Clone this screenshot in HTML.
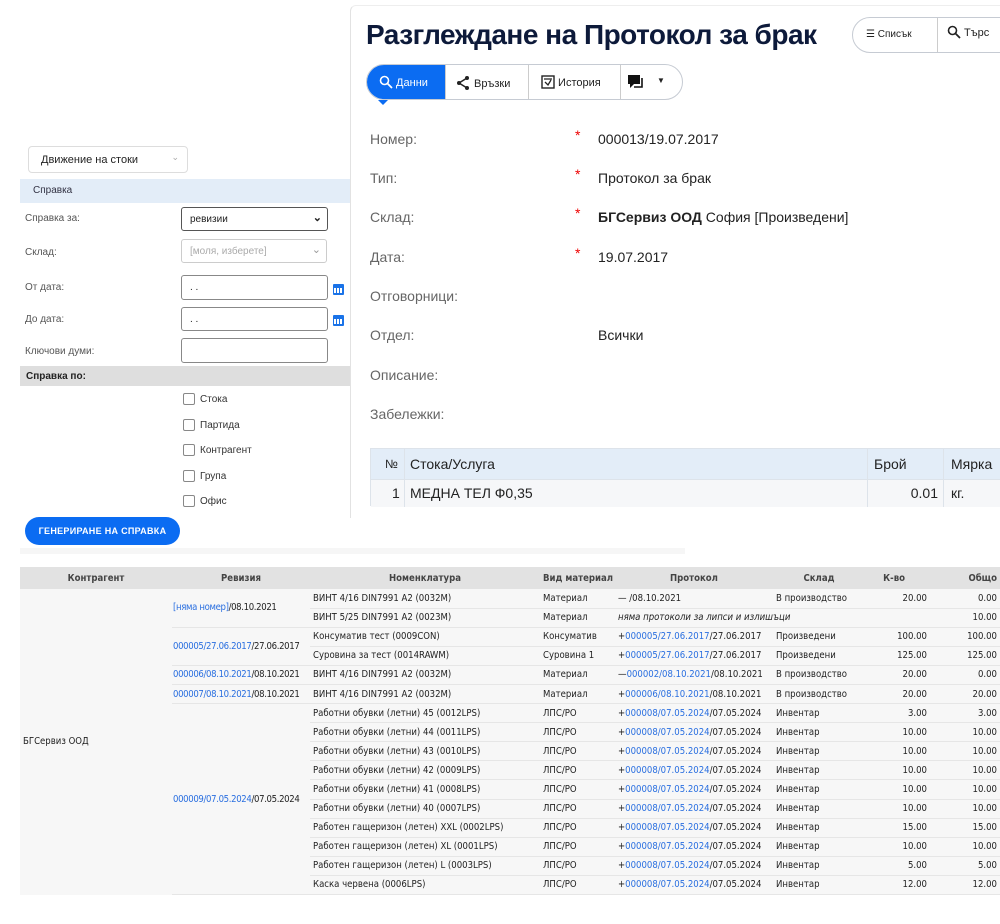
<!DOCTYPE html>
<html><head><meta charset="utf-8"><style>
*{box-sizing:border-box;margin:0;padding:0}
body{width:1000px;height:924px;background:#fff;font-family:"Liberation Sans","Noto Sans CJK SC",sans-serif;position:relative;overflow:hidden;color:#222}
.abs{position:absolute}
.lbl{position:absolute;left:25px;font-size:10px;color:#555}
.inp{position:absolute;left:181px;width:147px;height:25px;border:1px solid #888;border-radius:3px;background:#fff;font-size:10px;padding:6px 8px}
.cal{position:absolute;left:333px;width:11px;height:11px;background:#1a73e8;border-radius:1px}
.cal:after{content:"";position:absolute;left:1px;top:4px;width:9px;height:5px;background:repeating-linear-gradient(90deg,#fff 0 2px,#1a73e8 2px 3px)}
.cb{position:absolute;left:183px;width:12px;height:12px;border:1px solid #888;border-radius:2px}
.cbl{position:absolute;left:200px;font-size:10px;color:#333}
#panel{position:absolute;left:350px;top:5px;width:660px;height:513px;background:#fff;border-left:1px solid #e2e2e2;border-top:1px solid #eee;border-top-left-radius:6px}
.fl{position:absolute;left:370px;font-size:14px;color:#666}
.fv{position:absolute;left:598px;font-size:14px;color:#222}
.st{position:absolute;left:575px;color:#e00;font-size:14px}
table.b{position:absolute;left:20px;top:567px;width:980px;border-collapse:collapse;table-layout:fixed;font-size:9.5px;font-family:"DejaVu Sans Condensed","Liberation Sans",sans-serif}
table.b th{background:#e2e2e2;height:22px;font-weight:bold;color:#444;font-size:9.5px}
table.b td{background:#f7f7f7;height:19.1px;padding:0 3px;border-bottom:1px solid #e6e6e6;white-space:nowrap;overflow:hidden;color:#222}
table.b td.k{border-bottom:none}
table.b td.rv{padding:0 1px;letter-spacing:-0.35px}
.r{text-align:right}
a{color:#2a6fe0;text-decoration:none}
</style></head><body>

<div class="abs" style="left:28px;top:146px;width:160px;height:27px;border:1px solid #ddd;border-radius:4px;font-size:11px;padding:7px 12px;color:#222">Движение на стоки<span style="position:absolute;right:8px;top:5px;color:#aaa;font-size:9px">&#8964;</span></div>
<div class="abs" style="left:20px;top:179px;width:330px;height:24px;background:#e3edf8;font-size:10px;padding:6px 13px;color:#334">Справка</div>
<div class="lbl" style="top:213px">Справка за:</div>
<div class="inp" style="top:207px;height:24px;border-color:#555;padding:6px 8px">ревизии<span style="position:absolute;right:5px;top:3px;font-weight:bold;font-size:11px">&#8964;</span></div>
<div class="lbl" style="top:247px">Склад:</div>
<div class="inp" style="top:239px;width:146px;height:24px;border-color:#ccc;color:#aaa">[моля, изберете]<span style="position:absolute;right:5px;top:3px;color:#999;font-size:11px">&#8964;</span></div>
<div class="lbl" style="top:282px">От дата:</div>
<div class="inp" style="top:275px">. .</div><div class="cal" style="top:284px"></div>
<div class="lbl" style="top:314px">До дата:</div>
<div class="inp" style="top:307px;height:24px">. .</div><div class="cal" style="top:315px"></div>
<div class="lbl" style="top:346px">Ключови думи:</div>
<div class="inp" style="top:338px;height:25px"></div>
<div class="abs" style="left:20px;top:366px;width:330px;height:20px;background:#dedede;font-size:10px;font-weight:bold;padding:5px 6px;color:#222">Справка по:</div>
<div class="cb" style="top:393px"></div><div class="cbl" style="top:394px">Стока</div>
<div class="cb" style="top:419px"></div><div class="cbl" style="top:420px">Партида</div>
<div class="cb" style="top:444px"></div><div class="cbl" style="top:445px">Контрагент</div>
<div class="cb" style="top:470px"></div><div class="cbl" style="top:471px">Група</div>
<div class="cb" style="top:495px"></div><div class="cbl" style="top:496px">Офис</div>
<div class="abs" style="left:25px;top:517px;width:155px;height:28px;background:#0b6cf2;border-radius:14px;color:#fff;font-size:9px;font-weight:bold;text-align:center;line-height:28px;letter-spacing:.3px">ГЕНЕРИРАНЕ НА СПРАВКА</div>
<div class="abs" style="left:20px;top:548px;width:665px;height:6px;background:#f6f6f6"></div>

<div id="panel"></div>
<div class="abs" style="left:366px;top:19px;font-size:28px;font-weight:bold;color:#0d1a3a;letter-spacing:-.5px">Разглеждане на Протокол за брак</div>
<div class="abs" style="left:852px;top:17px;width:170px;height:36px;border:1.5px solid #c6cbd3;border-radius:18px"></div>
<div class="abs" style="left:937px;top:18px;width:1px;height:34px;background:#ccc"></div>
<div class="abs" style="left:866px;top:29px;font-size:10px;color:#222">&#9776; Списък</div>
<div class="abs" style="left:947px;top:25px;font-size:11px;color:#222"><svg width="14" height="14" viewBox="0 0 14 14" style="vertical-align:-3px"><circle cx="5.5" cy="5.5" r="4" fill="none" stroke="#222" stroke-width="1.6"/><path d="M8.5 8.5L13 13" stroke="#222" stroke-width="1.8"/></svg> Търс</div>
<div class="abs" style="left:366px;top:64px;width:317px;height:36px;border:1.5px solid #c6cbd3;border-radius:18px;overflow:hidden">
 <div class="abs" style="left:0;top:0;width:78px;height:36px;background:#0b6cf2;color:#fff;font-size:11px;padding:10px 0 0 12px"><svg width="14" height="14" viewBox="0 0 14 14" style="vertical-align:-3px"><circle cx="5.5" cy="5.5" r="4" fill="none" stroke="#fff" stroke-width="1.6"/><path d="M8.5 8.5L13 13" stroke="#fff" stroke-width="1.8"/></svg> Данни</div>
 <div class="abs" style="left:78px;top:0;width:1px;height:36px;background:#ccc"></div>
 <div class="abs" style="left:88px;top:10px;font-size:11px;color:#222"><svg width="16" height="16" viewBox="0 0 16 16" style="vertical-align:-4px"><path d="M12 3L4 8L12 13" fill="none" stroke="#222" stroke-width="1.5"/><circle cx="12" cy="3" r="2" fill="#222"/><circle cx="4" cy="8" r="2" fill="#222"/><circle cx="12" cy="13" r="2" fill="#222"/></svg> Връзки</div>
 <div class="abs" style="left:161px;top:0;width:1px;height:36px;background:#ccc"></div>
 <div class="abs" style="left:174px;top:10px;font-size:11px;color:#222"><svg width="14" height="14" viewBox="0 0 14 14" style="vertical-align:-3px"><rect x="1" y="1" width="12" height="12" fill="none" stroke="#222" stroke-width="1.4"/><path d="M3 4h8M4 7l3 3 3-5" fill="none" stroke="#222" stroke-width="1.3"/></svg> История</div>
 <div class="abs" style="left:253px;top:0;width:1px;height:36px;background:#ccc"></div>
 <svg class="abs" style="left:260px;top:9px" width="18" height="16" viewBox="0 0 18 16"><rect x="1" y="1" width="12" height="9" fill="#111"/><path d="M3 10v4l4-4z" fill="#111"/><path d="M15 4v9h-8" fill="none" stroke="#111" stroke-width="1.6"/></svg>
 <div class="abs" style="left:290px;top:11px;font-size:8px">&#9660;</div>
</div>
<div class="abs" style="left:378px;top:100px;width:0;height:0;border-left:5px solid transparent;border-right:5px solid transparent;border-top:5px solid #0b6cf2"></div>

<div class="fl" style="top:131px">Номер:</div><div class="st" style="top:127px">*</div><div class="fv" style="top:131px">000013/19.07.2017</div>
<div class="fl" style="top:170px">Тип:</div><div class="st" style="top:166px">*</div><div class="fv" style="top:170px">Протокол за брак</div>
<div class="fl" style="top:209px">Склад:</div><div class="st" style="top:205px">*</div><div class="fv" style="top:209px"><b>БГСервиз ООД</b> София [Произведени]</div>
<div class="fl" style="top:249px">Дата:</div><div class="st" style="top:245px">*</div><div class="fv" style="top:249px">19.07.2017</div>
<div class="fl" style="top:288px">Отговорници:</div>
<div class="fl" style="top:327px">Отдел:</div><div class="fv" style="top:327px">Всички</div>
<div class="fl" style="top:367px">Описание:</div>
<div class="fl" style="top:406px">Забележки:</div>

<div class="abs" style="left:370px;top:448px;width:640px;height:58px;border:1px solid #dde3ea;font-size:14px">
 <div class="abs" style="left:0;top:0;width:640px;height:30px;background:#e3edf8"></div>
 <div class="abs" style="left:0;top:30px;width:640px;height:28px;background:#f6f7f9"></div>
 <div class="abs" style="left:33px;top:0;width:1px;height:58px;background:#dde3ea"></div>
 <div class="abs" style="left:496px;top:0;width:1px;height:58px;background:#dde3ea"></div>
 <div class="abs" style="left:572px;top:0;width:1px;height:58px;background:#dde3ea"></div>
 <div class="abs" style="left:0;top:30px;width:640px;height:1px;background:#dde3ea"></div>
 <div class="abs" style="left:14px;top:8px;font-size:12px">№</div>
 <div class="abs" style="left:39px;top:7px">Стока/Услуга</div>
 <div class="abs" style="left:503px;top:7px">Брой</div>
 <div class="abs" style="left:580px;top:7px">Мярка</div>
 <div class="abs" style="left:21px;top:36px">1</div>
 <div class="abs" style="left:39px;top:36px">МЕДНА ТЕЛ Ф0,35</div>
 <div class="abs" style="left:530px;top:36px;width:37px;text-align:right">0.01</div>
 <div class="abs" style="left:580px;top:36px">кг.</div>
</div>

<table class="b">
<colgroup><col style="width:152px"><col style="width:138px"><col style="width:230px"><col style="width:75px"><col style="width:158px"><col style="width:92px"><col style="width:65px"><col style="width:70px"></colgroup>
<tr><th>Контрагент</th><th>Ревизия</th><th>Номенклатура</th><th style="text-align:left;padding-left:3px">Вид материал</th><th>Протокол</th><th>Склад</th><th class="r" style="padding-right:25px">К-во</th><th class="r" style="padding-right:3px">Общо</th></tr>
<tr><td class="k" rowspan="16">БГСервиз ООД</td><td class="rv" rowspan="2"><a>[няма номер]</a>/08.10.2021</td><td>ВИНТ 4/16 DIN7991 A2 (0032M)</td><td>Материал</td><td>— /08.10.2021</td><td>В производство</td><td class="r">20.00</td><td class="r">0.00</td></tr>
<tr><td>ВИНТ 5/25 DIN7991 A2 (0023M)</td><td>Материал</td><td colspan="2"><i>няма протоколи за липси и излишъци</i></td><td></td><td class="r">10.00</td></tr>
<tr><td class="rv" rowspan="2"><a>000005/27.06.2017</a>/27.06.2017</td><td>Консуматив тест (0009CON)</td><td>Консуматив</td><td>+<a>000005/27.06.2017</a>/27.06.2017</td><td>Произведени</td><td class="r">100.00</td><td class="r">100.00</td></tr>
<tr><td>Суровина за тест (0014RAWM)</td><td>Суровина 1</td><td>+<a>000005/27.06.2017</a>/27.06.2017</td><td>Произведени</td><td class="r">125.00</td><td class="r">125.00</td></tr>
<tr><td class="rv"><a>000006/08.10.2021</a>/08.10.2021</td><td>ВИНТ 4/16 DIN7991 A2 (0032M)</td><td>Материал</td><td>—<a>000002/08.10.2021</a>/08.10.2021</td><td>В производство</td><td class="r">20.00</td><td class="r">0.00</td></tr>
<tr><td class="rv"><a>000007/08.10.2021</a>/08.10.2021</td><td>ВИНТ 4/16 DIN7991 A2 (0032M)</td><td>Материал</td><td>+<a>000006/08.10.2021</a>/08.10.2021</td><td>В производство</td><td class="r">20.00</td><td class="r">20.00</td></tr>
<tr><td class="rv" rowspan="10"><a>000009/07.05.2024</a>/07.05.2024</td><td>Работни обувки (летни) 45 (0012LPS)</td><td>ЛПС/РО</td><td>+<a>000008/07.05.2024</a>/07.05.2024</td><td>Инвентар</td><td class="r">3.00</td><td class="r">3.00</td></tr>
<tr><td>Работни обувки (летни) 44 (0011LPS)</td><td>ЛПС/РО</td><td>+<a>000008/07.05.2024</a>/07.05.2024</td><td>Инвентар</td><td class="r">10.00</td><td class="r">10.00</td></tr>
<tr><td>Работни обувки (летни) 43 (0010LPS)</td><td>ЛПС/РО</td><td>+<a>000008/07.05.2024</a>/07.05.2024</td><td>Инвентар</td><td class="r">10.00</td><td class="r">10.00</td></tr>
<tr><td>Работни обувки (летни) 42 (0009LPS)</td><td>ЛПС/РО</td><td>+<a>000008/07.05.2024</a>/07.05.2024</td><td>Инвентар</td><td class="r">10.00</td><td class="r">10.00</td></tr>
<tr><td>Работни обувки (летни) 41 (0008LPS)</td><td>ЛПС/РО</td><td>+<a>000008/07.05.2024</a>/07.05.2024</td><td>Инвентар</td><td class="r">10.00</td><td class="r">10.00</td></tr>
<tr><td>Работни обувки (летни) 40 (0007LPS)</td><td>ЛПС/РО</td><td>+<a>000008/07.05.2024</a>/07.05.2024</td><td>Инвентар</td><td class="r">10.00</td><td class="r">10.00</td></tr>
<tr><td>Работен гащеризон (летен) XXL (0002LPS)</td><td>ЛПС/РО</td><td>+<a>000008/07.05.2024</a>/07.05.2024</td><td>Инвентар</td><td class="r">15.00</td><td class="r">15.00</td></tr>
<tr><td>Работен гащеризон (летен) XL (0001LPS)</td><td>ЛПС/РО</td><td>+<a>000008/07.05.2024</a>/07.05.2024</td><td>Инвентар</td><td class="r">10.00</td><td class="r">10.00</td></tr>
<tr><td>Работен гащеризон (летен) L (0003LPS)</td><td>ЛПС/РО</td><td>+<a>000008/07.05.2024</a>/07.05.2024</td><td>Инвентар</td><td class="r">5.00</td><td class="r">5.00</td></tr>
<tr><td>Каска червена (0006LPS)</td><td>ЛПС/РО</td><td>+<a>000008/07.05.2024</a>/07.05.2024</td><td>Инвентар</td><td class="r">12.00</td><td class="r">12.00</td></tr>
</table>
</body></html>
